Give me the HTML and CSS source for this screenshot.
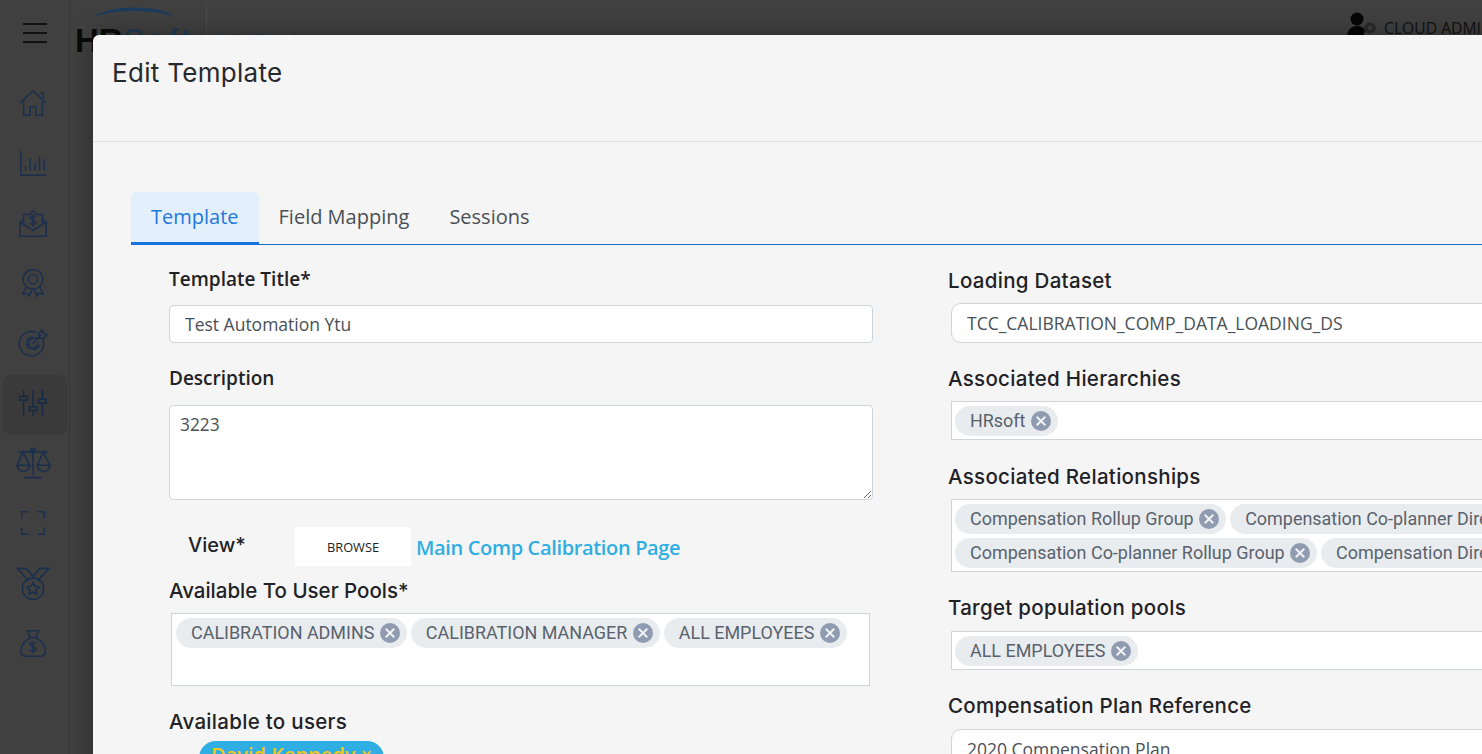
FILE: index.html
```html
<!DOCTYPE html>
<html>
<head>
  <title>Edit Template</title>
  <link rel="stylesheet" href="styles.css">
</head>
<body>

  <!-- page behind the dialog -->
  <div class="app">
    <div class="sidebar">
      <div class="burger"><span></span><span></span><span></span></div>

      <a class="nav-item">
        <svg viewBox="0 0 32 32"><path d="M2 16 16 3l14 13M6 13v16h7v-9h6v9h7V13M24 5h3v6"/></svg>
      </a>
      <a class="nav-item">
        <svg viewBox="0 0 32 32"><path d="M3 3v26h27M8 24v-5M13 24V11M18 24v-8M23 24V9M28 24V12"/></svg>
      </a>
      <a class="nav-item">
        <svg viewBox="0 0 32 32"><path d="M6 12 2 15v15h28V15l-4-3M2 15l14 9 14-9M6 17V7h6l4-4 4 4h6v10"/><path d="M19 10c-1-2-6-2-6 .5S19 13 19 15.500 14 18 13 16M16 7v13"/></svg>
      </a>
      <a class="nav-item">
        <svg viewBox="0 0 32 32"><circle cx="16" cy="12" r="10.500"/><circle cx="16" cy="12" r="5"/><path d="M9 20 5 28l5-1 2 3 3-7M23 20l4 8-5-1-2 3-3-7"/></svg>
      </a>
      <a class="nav-item">
        <svg viewBox="0 0 32 32"><path d="M26 11a13 13 0 1 1-6-6"/><path d="M21 15a6 6 0 1 1-5-5M25 7 15 17M22 6l4-4 1 4 4 1-4 4h-5z"/><path d="M21 12a6 6 0 1 0 2 6"/></svg>
      </a>
      <a class="nav-item active">
        <svg viewBox="0 0 32 32"><path d="M6 2v7M6 13v17M16 2v18M16 24v6M26 2v10M26 16v14M2 9h8v4H2zM12 20h8v4h-8zM22 12h8v4h-8z"/></svg>
      </a>
      <a class="nav-item wide">
        <svg viewBox="0 0 32 32"><path d="M3 6h26M16 4v23M8 29h16M7 6 2 18h11zM25 6l-5 12h11z"/><path d="M2 18a5.500 5.500 0 0 0 11 0M20 18a5.500 5.500 0 0 0 11 0"/><circle cx="16" cy="5" r="2"/></svg>
      </a>
      <a class="nav-item">
        <svg viewBox="0 0 32 32"><path d="M4 11V4h7M21 4h7v7M28 21v7h-7M11 28H4v-7"/></svg>
      </a>
      <a class="nav-item wide">
        <svg viewBox="0 0 32 32"><path d="M12 14 2 3h8l6 7 6-7h8L20 14"/><circle cx="16" cy="21" r="9.500"/><path d="m16 15.500 1.700 3.500 3.800.5-2.800 2.600.7 3.800-3.400-1.900-3.400 1.900.7-3.800-2.800-2.600 3.800-.5z"/></svg>
      </a>
      <a class="nav-item">
        <svg viewBox="0 0 32 32"><path d="M10 3h12l-3 7h-6zM13 10h6M13 10C7 14 2 20 3 26c.4 2.500 2 4 5 4h16c3 0 4.600-1.500 5-4 1-6-4-12-10-16"/><path d="M19 17c-1-2-6-2-6 .5s6 2 6 5-5 2.500-6 .5M16 14.500V27"/></svg>
      </a>
    </div>

    <div class="topbar">
      <div class="logo">
        <svg class="logo-arc" viewBox="0 0 84 11" preserveAspectRatio="none"><path d="M0 10C22-2 62-3 84 10 60 2 24 2 0 10z"/></svg>
        <span class="logo-hr">HR</span><span class="logo-soft">Soft</span>
      </div>
      <div class="logo-sub">NOBEL i</div>
      <div class="user">
        <svg class="user-icon" viewBox="0 0 30 26"><circle class="user-gear" cx="23" cy="16" r="4"/><circle cx="10" cy="7" r="6.500"/><path d="M0 26c0-8 4-12 10-12 4 0 7 1.500 8 5l-2 7z"/></svg>
        <span class="user-name">CLOUD ADMIN</span>
      </div>
    </div>
  </div>

  <!-- dialog -->
  <div class="modal">
    <div class="modal-header">
      <h4>Edit Template</h4>
    </div>

    <div class="modal-body">
      <div class="tabs">
        <a class="tab active">Template</a>
        <a class="tab">Field Mapping</a>
        <a class="tab">Sessions</a>
      </div>

      <div class="form">
        <div class="col-left">
          <label class="title-label">Template Title*</label>
          <input class="field" type="text" value="Test Automation Ytu">

          <label class="desc-label">Description</label>
          <textarea class="field area">3223</textarea>

          <div class="view-row">
            <span class="view-label">View*</span>
            <button class="browse">BROWSE</button>
            <a class="view-link">Main Comp Calibration Page</a>
          </div>

          <label class="pools-label">Available To User Pools*</label>
          <div class="chip-box pools">
            <span class="chip">CALIBRATION ADMINS <i class="chip-x"></i></span>
            <span class="chip">CALIBRATION MANAGER <i class="chip-x"></i></span>
            <span class="chip">ALL EMPLOYEES <i class="chip-x"></i></span>
          </div>

          <label class="users-label">Available to users</label>
          <span class="user-pill">David Kennedy ×</span>
        </div>

        <div class="col-right">
          <label>Loading Dataset</label>
          <input class="field round" type="text" value="TCC_CALIBRATION_COMP_DATA_LOADING_DS">

          <label>Associated Hierarchies</label>
          <div class="chip-box">
            <span class="chip">HRsoft <i class="chip-x"></i></span>
          </div>

          <label class="rel-label">Associated Relationships</label>
          <div class="chip-box rel">
            <span class="chip">Compensation Rollup Group <i class="chip-x"></i></span>
            <span class="chip">Compensation Co-planner Direct Group <i class="chip-x"></i></span>
            <span class="chip">Compensation Co-planner Rollup Group <i class="chip-x"></i></span>
            <span class="chip">Compensation Direct Group <i class="chip-x"></i></span>
          </div>

          <label class="low-label">Target population pools</label>
          <div class="chip-box">
            <span class="chip">ALL EMPLOYEES <i class="chip-x"></i></span>
          </div>

          <label class="low-label">Compensation Plan Reference</label>
          <input class="field round" type="text" value="2020 Compensation Plan">
        </div>
      </div>
    </div>
  </div>

</body>
</html>
```

FILE: styles.css
```css
html, body { height: 100%; }
body {
  margin: 0;
  overflow: hidden;
  background: #404040;
  font-family: "Open Sans", sans-serif;
}

/* page behind */
.app { display: flex; height: 100vh; }

.sidebar {
  width: 69px;
  flex: none;
  border-right: 1px solid #393939;
  display: flex;
  flex-direction: column;
  align-items: center;
  box-sizing: content-box;
}
.burger {
  margin: 23px 0 32px;
  width: 24px;
  display: flex;
  flex-direction: column;
  gap: 7px;
}
.burger span { height: 2px; background: #111; }

.nav-item {
  width: 64px;
  height: 60px;
  box-sizing: border-box;
  padding: 0 4px 4px 0;
  border-radius: 8px;
  display: flex;
  align-items: center;
  justify-content: center;
}
.nav-item svg {
  width: 30px;
  height: 30px;
  fill: none;
  stroke: #1a2f4d;
  stroke-width: 1.600;
}
.nav-item.wide svg { width: 36px; height: 36px; stroke-width: 1.400; }
.nav-item.active { background: #3a3a3a; }
.nav-item.active svg { stroke: #172a45; }

.topbar { flex: 1; position: relative; min-width: 0; }

.logo {
  position: absolute;
  left: 5px;
  top: 5px;
  width: 132px;
  height: 40px;
  box-sizing: border-box;
  padding-top: 17px;
  font: 700 33px/38px "Liberation Sans", sans-serif;
  color: #0a0a0a;
  border-right: 1px solid #4c4c4c;
}
.logo-soft { color: #1d3a55; font-weight: 400; letter-spacing: 3px; }
.logo-arc {
  position: absolute;
  left: 17px;
  top: 2px;
  width: 84px;
  height: 11px;
  fill: #1b3c5c;
}
.logo-sub {
  position: absolute;
  left: 146px;
  top: 28px;
  font-size: 15px;
  font-weight: 700;
  letter-spacing: 2px;
  word-spacing: 10px;
  color: #1d3a55;
}

.user {
  position: absolute;
  left: 1277px;
  top: 11px;
  display: flex;
  align-items: center;
  gap: 7px;
  font-size: 15.700px;
  color: #111;
  white-space: nowrap;
}
.user-icon { width: 30px; height: 26px; fill: #050505; flex: none; }
.user-gear { fill: none; stroke: #2a2a2a; stroke-width: 3.500; }
.user-name { padding-top: 6px; }

/* dialog */
.modal {
  position: absolute;
  left: 93px;
  top: 35px;
  width: 1500px;
  height: 900px;
  background: #f5f5f5;
  border-radius: 6px 0 0 0;
  box-shadow: 0 0 24px rgba(0, 0, 0, .35);
}
.modal-header {
  height: 107px;
  box-sizing: border-box;
  border-bottom: 1px solid #dfe1e3;
  padding: 20px 19px 0;
}
.modal-header h4 {
  margin: 0;
  font: 400 26px/36px Inter, sans-serif;
  letter-spacing: .3px;
  color: #26292e;
}

.modal-body { padding: 50px 0 0 38px; }

.tabs {
  display: flex;
  border-bottom: 1px solid #1a6fc0;
  height: 52px;
}
.tab {
  padding: 0 20px;
  font-size: 20px;
  line-height: 50px;
  color: #4a4f55;
}
.tab.active {
  color: #1f78dc;
  background: #e3effb;
  border-bottom: 3px solid #1273de;
  height: 50px;
  border-radius: 5px 5px 0 0;
}

.form { display: flex; padding: 0 0 0 38px; }
.col-left { width: 704px; flex: none; display: flex; flex-direction: column; align-items: flex-start; }
.col-right { width: 700px; flex: none; margin-left: 75px; display: flex; flex-direction: column; align-items: flex-start; }

label {
  display: block;
  font: 500 20.500px/28px Inter, sans-serif;
  letter-spacing: .3px;
  color: #1f2226;
}
.col-right label { margin-top: 22px; margin-bottom: 8px; }
.col-right .rel-label { margin-top: 23px; }
.col-right .low-label { margin-bottom: 9px; }
.col-left .title-label,
.col-left .desc-label {
  font: 600 19px/28px "Open Sans", sans-serif;
  letter-spacing: 0;
}
.col-left .title-label { margin-top: 20px; margin-bottom: 12px; }
.col-left .desc-label { margin-top: 21px; margin-bottom: 13px; }
.col-left .pools-label { margin-top: 11px; margin-bottom: 8px; letter-spacing: 0; }
.col-left .users-label { margin-top: 22px; margin-bottom: 5px; }

.field {
  display: block;
  width: 100%;
  height: 38px;
  box-sizing: border-box;
  padding: 0 15px;
  border: 1px solid #ced4da;
  border-radius: 4px;
  background: #fff;
  font: 17.500px "Open Sans", sans-serif;
  color: #495057;
}
.field.round { height: 40px; border-radius: 10px; margin-left: 3px; }
.field.area {
  height: 95px;
  padding: 8px 10px;
  font-size: 17.300px;
  line-height: 22px;
}

.view-row {
  display: flex;
  align-items: center;
  height: 39px;
  margin-top: 27px;
}
.view-label {
  width: 126px;
  padding-left: 19px;
  box-sizing: border-box;
  font: 500 20px/28px Inter, sans-serif;
  color: #1f2226;
  margin-top: -3px;
}
.browse {
  width: 116px;
  height: 39px;
  border: none;
  background: #fff;
  font: 12.800px "Open Sans", sans-serif;
  color: #222;
  padding: 0;
}
.view-link {
  margin: 1px 0 0 5px;
  font-size: 20px;
  font-weight: 600;
  color: #2eaee3;
  letter-spacing: -.35px;
}

.chip-box {
  width: 100%;
  box-sizing: border-box;
  margin-left: 3px;
  height: 39px;
  padding: 4px 3px 3px;
  border: 1px solid #ced4da;
  background: #fff;
  display: flex;
  flex-wrap: wrap;
  gap: 3px 4px;
  overflow: hidden;
}
.chip-box.rel { height: 73px; }
.chip-box.pools {
  width: 699px;
  height: 73px;
  margin-left: 2px;
  padding-left: 4px;
  align-content: flex-start;
}

.chip {
  flex: none;
  height: 30px;
  padding: 0 7px 0 15px;
  border-radius: 15px;
  background: #e9ecef;
  display: inline-flex;
  align-items: center;
  gap: 5.500px;
  font: 17.950px/30px Roboto, sans-serif;
  color: #59626c;
  white-space: nowrap;
}
.chip-x {
  width: 20px;
  height: 20px;
  border-radius: 50%;
  background: #8f9bb0;
  position: relative;
}
.chip-x::before, .chip-x::after {
  content: "";
  position: absolute;
  left: 4px;
  top: 9px;
  width: 12px;
  height: 2px;
  background: #f1f3f5;
  transform: rotate(45deg);
}
.chip-x::after { transform: rotate(-45deg); }

.user-pill {
  margin-left: 30px;
  height: 34px;
  padding: 0 12px;
  border-radius: 17px;
  background: #2eaee3;
  color: #f5c518;
  font: 600 20px/28px "Open Sans", sans-serif;
}
```
